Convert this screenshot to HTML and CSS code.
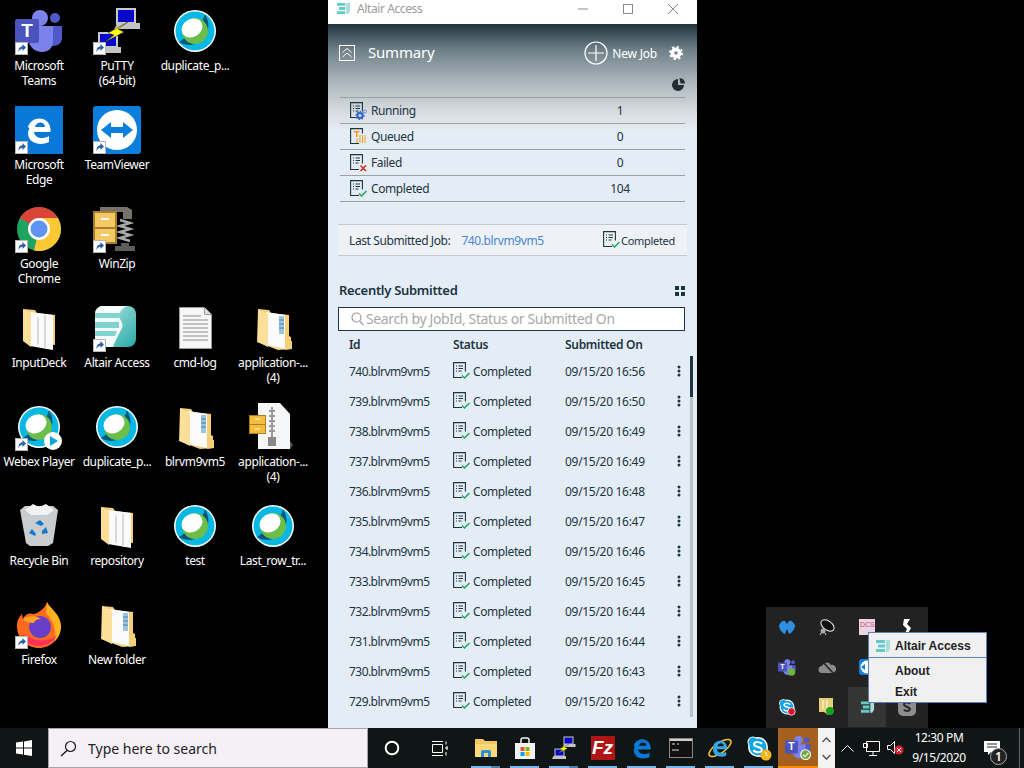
FILE: index.html
```html
<!DOCTYPE html>
<html lang="en">
<head>
    <meta charset="UTF-8">
    <title>Altair Access</title>
    <link rel="stylesheet" href="styles.css">
</head>
<body>

    <!-- Shared icons -->
    <svg class="sprites" width="0" height="0">
        <defs>
            <linearGradient id="altair-tile" x1="0" y1="0" x2="1" y2="1">
                <stop offset="0" stop-color="#b6ebe8"/>
                <stop offset="1" stop-color="#2aa9a6"/>
            </linearGradient>
        </defs>
        <symbol id="sc" viewBox="0 0 48 48">
            <rect x="0.5" y="35.5" width="12" height="12" fill="#fff" stroke="#b5b5b5"/>
            <path d="M3.5 45c0-4 1.500-5.500 4-5.800V37l3.500 3.500-3.500 3.500v-2.300c-1.500 0-3 .8-4 3.300z" fill="#2a5fa5"/>
        </symbol>
        <symbol id="webex" viewBox="0 0 48 48">
            <circle cx="24" cy="24" r="21" fill="#fff"/>
            <circle cx="24" cy="24" r="19.500" fill="#07b8e4"/>
            <path d="M34 7.400A19.500 19.500 0 0 1 8 35.200L15 30A12 12 0 0 0 31 15z" fill="#03577a"/>
            <circle cx="24" cy="24" r="13" fill="#6cbe4b"/>
            <ellipse cx="21" cy="21" rx="11" ry="9" transform="rotate(-30 21 21)" fill="#fff"/>
        </symbol>
        <symbol id="folder" viewBox="0 0 48 48">
            <path d="M8 5l12 1 2 3 18 2v30l-31-4z" fill="#f3cf78"/>
            <path d="M15 8l23 3v35l-23-4z" fill="#fbfbfb"/>
            <path d="M29 11l2 1v33l-2-1zM22 12l2 3v26l-2-1z" fill="#d9d9d9"/>
            <path d="M8 5l8 4v34l-8-6z" fill="#fbdf98"/>
        </symbol>
        <symbol id="folder-full" viewBox="0 0 48 48">
            <path d="M9 5l11 1 2 3 18 2v26l3 0v8l-14 1-21-8z" fill="#f3cf78"/>
            <path d="M17 8l19 3v34l-19-4z" fill="#fbfbfb"/>
            <path d="M30 12h5v18h-5z" fill="#9cc3dc"/>
            <path d="M30 16h5M30 20h5M30 24h5" stroke="#3d85b5"/>
            <path d="M36 30l6 3v12l-6 1z" fill="#f3cf78"/>
            <path d="M9 5l10 5v33L9 38z" fill="#fbe09a"/>
        </symbol>
        <symbol id="altair" viewBox="0 0 48 48">
            <rect x="2" y="2" width="41" height="41" rx="8" fill="url(#altair-tile)"/>
            <path d="M2 10a8 8 0 0 1 8-8h24c-6 3-9 8-7 13 2 4 4 7 1 11-2 4-5 9-8 17H10a8 8 0 0 1-8-8z" fill="#f6fbfb"/>
            <path d="M2 9h26l-2 5H2zM2 18h24v6H2zM2 29h20v-1H2z" fill="#7fd4cf"/>
            <path d="M2 27h22l-2 5H2z" fill="#7fd4cf"/>
        </symbol>
        <symbol id="applogo" viewBox="0 0 16 14">
            <path d="M1 1h9v3H1zM3 5.500h7v3H3zM1 10h9v3H1z" fill="#63cbc5"/>
            <path d="M11 1h4v9l-2 3h-2z" fill="#a5dfdc"/>
        </symbol>
        <symbol id="doc" viewBox="0 0 17 18">
            <path d="M9 15.500H.6V.6h11.800v9" fill="none" stroke="#1d3442" stroke-width="1.100"/>
            <path d="M3 4h1M3 6.500h1M3 9h1M5.500 4h4.500M5.500 6.500h4.500M5.500 9h3" stroke="#1d3442"/>
        </symbol>
        <symbol id="done" viewBox="0 0 17 18">
            <use href="#doc"/>
            <path d="M9 13.500l2.500 2.500 5-5" fill="none" stroke="#1aa75b" stroke-width="1.500"/>
        </symbol>
        <symbol id="fail" viewBox="0 0 17 18">
            <use href="#doc"/>
            <path d="M10.500 11.500l5.500 5.500M16 11.500l-5.500 5.500" stroke="#c8301c" stroke-width="1.600"/>
        </symbol>
        <symbol id="run" viewBox="0 0 17 18">
            <use href="#doc"/>
            <circle cx="10" cy="13.500" r="2.600" fill="none" stroke="#2f62c8" stroke-width="2"/>
            <circle cx="10" cy="13.500" r="4" fill="none" stroke="#2f62c8" stroke-width="1.200" stroke-dasharray="1.500 1.500"/>
            <circle cx="15" cy="9.500" r="1.500" fill="none" stroke="#6b8fd4"/>
        </symbol>
        <symbol id="queue" viewBox="0 0 17 18">
            <path d="M9 15.500H.6V.6h11.800v5" fill="none" stroke="#1d3442" stroke-width="1.100"/>
            <path d="M3.500 3h6v1.500h-2V9H6V4.500h-2.500z" fill="#f29a12"/>
            <path d="M7 10v5M10 7v8M12.500 7v8M15 7v8" stroke="#f29a12"/>
        </symbol>
        <symbol id="kebab" viewBox="0 0 4 12">
            <circle cx="2" cy="2" r="1.500"/><circle cx="2" cy="6" r="1.500"/><circle cx="2" cy="10" r="1.500"/>
        </symbol>
        <symbol id="putty" viewBox="0 0 48 48">
            <path d="M23 1h20v17H23z" fill="#c9c9c9"/><path d="M25 3h16v12H25z" fill="#0707c9"/>
            <path d="M25 16h22v6H21z" fill="#c4c4c4"/>
            <path d="M5 25h20v16H5z" fill="#c9c9c9"/><path d="M7 27h16v12H7z" fill="#0707c9"/>
            <path d="M3 40h25v6H0z" fill="#c4c4c4"/>
            <path d="M35 15L15 26l6 2-9 7 19-10-6-3 10-7z" fill="#ff0" stroke="#222" stroke-width=".5"/>
        </symbol>
        <symbol id="edge" viewBox="0 0 32 32">
            <path d="M5 13C7 6 14 3 20 5c6 2 8 8 7.500 13H11c.5 6 9 8 15 4v6c-8 4-20 2-21-8-.5-4 3-9 8-10-3 1-5 3-6 5zm7 0h10c0-6-9-6-10 0z" fill="currentColor"/>
        </symbol>
        <symbol id="skype" viewBox="0 0 24 24">
            <circle cx="12" cy="12" r="10" fill="#fff"/>
            <circle cx="7" cy="7" r="5.500" fill="#fff"/><circle cx="17" cy="17" r="5.500" fill="#fff"/>
            <circle cx="12" cy="12" r="8.500" fill="#12a5e6"/>
            <circle cx="7" cy="7" r="4.500" fill="#12a5e6"/><circle cx="17" cy="17" r="4.500" fill="#12a5e6"/>
            <path d="M16 9c-1-2-7-3-8 0 0 4 8 2 8 6-1 3-7 3-8.500 0" fill="none" stroke="#fff" stroke-width="2"/>
        </symbol>
        <symbol id="teams" viewBox="0 0 48 48">
            <circle cx="25" cy="11" r="8" fill="#7b83eb"/>
            <circle cx="40" cy="11" r="5" fill="#5059c9"/>
            <path d="M36 19h11v12c0 5-4 8-9 8h-4z" fill="#5059c9"/>
            <path d="M14 19h24v16c0 6-5 10-11 10-6 0-12-4-13-10z" fill="#7b83eb"/>
            <rect y="12" width="24" height="24" rx="2" fill="#4b53bc"/>
        </symbol>
    </svg>

    <div class="desktop">
        <div class="shortcuts">
            <a class="shortcut"><svg class="ico" viewBox="0 0 48 48"><use href="#teams"/><text x="12" y="30" class="logo-t">T</text><use href="#sc"/></svg><span>Microsoft<br>Teams</span></a>
            <a class="shortcut"><svg class="ico"><use href="#putty"/><use href="#sc"/></svg><span>PuTTY<br>(64-bit)</span></a>
            <a class="shortcut"><svg class="ico"><use href="#webex"/></svg><span>duplicate_p...</span></a>
            <a class="shortcut"></a>

            <a class="shortcut">
                <svg class="ico" viewBox="0 0 48 48">
                    <rect width="48" height="48" fill="#0a78d7"/>
                    <svg x="8" y="8" width="32" height="32" color="#fff"><use href="#edge"/></svg>
                    <use href="#sc"/>
                </svg>
                <span>Microsoft<br>Edge</span>
            </a>
            <a class="shortcut">
                <svg class="ico" viewBox="0 0 48 48">
                    <rect width="48" height="48" rx="3" fill="#0b7fdc"/>
                    <circle cx="24" cy="24" r="20" fill="#fff"/>
                    <path d="M8 24l10-8v5h12v-5l10 8-10 8v-5H18v5z" fill="#0b7fdc"/>
                    <use href="#sc"/>
                </svg>
                <span>TeamViewer</span>
            </a>
            <a class="shortcut"></a>
            <a class="shortcut"></a>

            <a class="shortcut">
                <svg class="ico" viewBox="0 0 48 48">
                    <circle cx="24" cy="24" r="22" fill="#1da462"/>
                    <path d="M24 24L5 13a22 22 0 0 1 38 0z" fill="#db4437"/>
                    <path d="M24 24h22a22 22 0 0 1-27 21.500L24 24zM24 13h19a22 22 0 0 1 3 11H34z" fill="#fcc934"/>
                    <circle cx="24" cy="24" r="11" fill="#fff"/>
                    <circle cx="24" cy="24" r="8.500" fill="#5f95f0"/>
                    <use href="#sc"/>
                </svg>
                <span>Google<br>Chrome</span>
            </a>
            <a class="shortcut">
                <svg class="ico" viewBox="0 0 48 48">
                    <path d="M7 2h27l5 3v9h-9V7H7z" fill="#77726a"/>
                    <path d="M27 15l10 3-10 3 10 3-10 3 10 3-10 3 10 3" fill="none" stroke="#a9a9a9" stroke-width="2.500"/>
                    <path d="M28 38h8v3h-8zM22 41h20v5H22z" fill="#5d5d5d"/>
                    <rect y="6" width="24" height="33" fill="#a57f2c"/>
                    <rect x="2" y="8" width="20" height="14" fill="#f4c965"/>
                    <rect x="2" y="24" width="20" height="13" fill="#f4c965"/>
                    <path d="M8 14h8M8 30h8" stroke="#fff" stroke-width="2"/>
                    <use href="#sc"/>
                </svg>
                <span>WinZip</span>
            </a>
            <a class="shortcut"></a>
            <a class="shortcut"></a>

            <a class="shortcut"><svg class="ico"><use href="#folder"/></svg><span>InputDeck</span></a>
            <a class="shortcut"><svg class="ico"><use href="#altair"/><use href="#sc"/></svg><span>Altair Access</span></a>
            <a class="shortcut">
                <svg class="ico" viewBox="0 0 48 48">
                    <path d="M8.500 3.500h25l7 7v34h-32z" fill="#f6f6f6" stroke="#9a9a9a"/>
                    <path d="M33.500 3.500v7h7" fill="#ddd" stroke="#9a9a9a"/>
                    <path d="M12 12h18M12 16h25M12 20h25M12 24h25M12 28h25M12 32h25M12 36h25" stroke="#8c8c8c"/>
                </svg>
                <span>cmd-log</span>
            </a>
            <a class="shortcut"><svg class="ico"><use href="#folder-full"/></svg><span>application-...<br>(4)</span></a>

            <a class="shortcut">
                <svg class="ico">
                    <use href="#webex"/>
                    <circle cx="38" cy="38" r="9" fill="#fff"/>
                    <path d="M35 33l8 5-8 5z" fill="#07a4d8"/>
                    <use href="#sc"/>
                </svg>
                <span>Webex Player</span>
            </a>
            <a class="shortcut"><svg class="ico"><use href="#webex"/></svg><span>duplicate_p...</span></a>
            <a class="shortcut"><svg class="ico"><use href="#folder-full"/></svg><span>blrvm9vm5</span></a>
            <a class="shortcut">
                <svg class="ico" viewBox="0 0 48 48">
                    <path d="M9 0h22l10 11v35H9z" fill="#f4f6f8"/>
                    <path d="M41 38l3 4-3 4z" fill="#555"/>
                    <path d="M23 4v30M20 8h6M20 13h6M20 18h6M20 23h6M20 28h6" stroke="#9a9a9a" stroke-width="2"/>
                    <rect x="19" y="34" width="8" height="9" fill="#888"/>
                    <rect y="12" width="17" height="19" fill="#a57f2c"/>
                    <rect x="1" y="13" width="15" height="8" fill="#f6bd3c"/>
                    <rect x="1" y="22" width="15" height="8" fill="#f6bd3c"/>
                    <path d="M6 16h5M6 26h5" stroke="#fff"/>
                </svg>
                <span>application-...<br>(4)</span>
            </a>

            <a class="shortcut">
                <svg class="ico" viewBox="0 0 48 48">
                    <path d="M5 8l5-4h28l5 4-5 33-5 3H15l-4-3z" fill="#c9cdd0"/>
                    <path d="M10 8l8-6 6 3 7-3 8 6-7 5H16z" fill="#f2f2f2"/>
                    <path d="M20 21l5-3 4 4-3 2zM31 25l2 6-6 1v-3zM17 27l4 5-1 2-6-3z" fill="#1479c9"/>
                </svg>
                <span>Recycle Bin</span>
            </a>
            <a class="shortcut"><svg class="ico"><use href="#folder"/></svg><span>repository</span></a>
            <a class="shortcut"><svg class="ico"><use href="#webex"/></svg><span>test</span></a>
            <a class="shortcut"><svg class="ico"><use href="#webex"/></svg><span>Last_row_tr...</span></a>

            <a class="shortcut">
                <svg class="ico" viewBox="0 0 48 48">
                    <path d="M32 1c2 6 13 11 14 24 0 12-10 22-22 22C12 47 1 37 2 23c.5-5 3-8 5-10l1 5c3-6 7-6 11-5 4-1 11-5 13-12z" fill="#ff6a1f"/>
                    <path d="M32 1c2 6 13 11 14 24 0 6-2 11-6 15 1-12-2-22-9-27z" fill="#ffb321"/>
                    <path d="M6 34c4 9 14 13 24 10 6-2 10-6 12-10-6 6-20 8-29 1z" fill="#ff2f5c"/>
                    <circle cx="25" cy="26" r="11" fill="#6a3fc8"/>
                    <path d="M8 18c5-3 12-4 18 0-4 0-6 1-7 4-4 0-8-1-11-4z" fill="#ffa41f"/>
                    <use href="#sc"/>
                </svg>
                <span>Firefox</span>
            </a>
            <a class="shortcut"><svg class="ico"><use href="#folder-full"/></svg><span>New folder</span></a>
        </div>

        <!-- Altair Access window -->
        <section class="window">
            <div class="titlebar">
                <svg class="title-logo"><use href="#applogo"/></svg>
                <span class="title-text">Altair Access</span>
                <div class="win-controls">
                    <svg width="12" height="12" viewBox="0 0 12 12"><path d="M1 6h10" stroke="#8a8a8a"/></svg>
                    <svg width="12" height="12" viewBox="0 0 12 12"><rect x="1.500" y="1.500" width="9" height="9" fill="none" stroke="#8a8a8a"/></svg>
                    <svg width="12" height="12" viewBox="0 0 12 12"><path d="M1 1l10 10M11 1L1 11" stroke="#8a8a8a"/></svg>
                </div>
            </div>

            <div class="win-body">
                <header class="head">
                    <svg class="collapse" width="16" height="16" viewBox="0 0 16 16">
                        <rect x=".5" y=".5" width="15" height="15" fill="none" stroke="#fff"/>
                        <path d="M3.500 7.500L8 3.500l4.500 4M3.500 12L8 8l4.500 4" fill="none" stroke="#fff"/>
                    </svg>
                    <h1 class="head-title">Summary</h1>
                    <svg class="new-job-ico" width="24" height="24" viewBox="0 0 24 24">
                        <circle cx="12" cy="12" r="11" fill="none" stroke="#fff" stroke-width="1.200"/>
                        <path d="M12 4v16M4 12h16" stroke="#fff" stroke-width="1.200"/>
                    </svg>
                    <span class="new-job">New Job</span>
                    <svg class="gear" width="14" height="14" viewBox="0 0 14 14">
                        <circle cx="7" cy="7" r="3.600" fill="none" stroke="#fff" stroke-width="3.600"/>
                        <circle cx="7" cy="7" r="6" fill="none" stroke="#fff" stroke-width="2" stroke-dasharray="2.300 2.400"/>
                    </svg>
                </header>

                <div class="pie-row">
                    <svg width="13" height="13" viewBox="0 0 13 13">
                        <path d="M6 1a6 6 0 1 0 6 6H6z" fill="#222c33"/>
                        <path d="M7.500 0a5.500 5.500 0 0 1 5.500 5.500H8.500z" fill="#222c33"/>
                    </svg>
                </div>

                <div class="summary">
                    <div class="summary-row"><svg class="status-ico"><use href="#run"/></svg><span class="summary-name">Running</span><span class="summary-count">1</span></div>
                    <div class="summary-row"><svg class="status-ico"><use href="#queue"/></svg><span class="summary-name">Queued</span><span class="summary-count">0</span></div>
                    <div class="summary-row"><svg class="status-ico"><use href="#fail"/></svg><span class="summary-name">Failed</span><span class="summary-count">0</span></div>
                    <div class="summary-row"><svg class="status-ico"><use href="#done"/></svg><span class="summary-name">Completed</span><span class="summary-count">104</span></div>
                </div>

                <div class="last-job">
                    <span>Last Submitted Job:</span>
                    <span class="last-id">740.blrvm9vm5</span>
                    <svg class="status-ico"><use href="#done"/></svg>
                    <span class="last-status">Completed</span>
                </div>

                <div class="recent-head">
                    <h2 class="recent-title">Recently Submitted</h2>
                    <svg width="10" height="10" viewBox="0 0 10 10"><path d="M0 0h4v4H0zM6 0h4v4H6zM0 6h4v4H0zM6 6h4v4H6z" fill="#1d3442"/></svg>
                </div>

                <div class="search">
                    <svg width="13" height="14" viewBox="0 0 13 14">
                        <circle cx="5.500" cy="5.500" r="4.500" fill="none" stroke="#9a9a9a" stroke-width="1.200"/>
                        <path d="M8.500 9l4 4" stroke="#9a9a9a" stroke-width="1.200"/>
                    </svg>
                    <input class="search-input" type="text" placeholder="Search by JobId, Status or Submitted On">
                </div>

                <div class="job-row job-head">
                    <span class="col-id">Id</span><span class="col-status">Status</span><span class="col-date">Submitted On</span>
                </div>

                <div class="jobs">
                    <div class="job-list">
                        <div class="job-row"><span class="col-id">740.blrvm9vm5</span><span class="col-status"><svg class="status-ico"><use href="#done"/></svg>Completed</span><span class="col-date">09/15/20 16:56</span><svg class="kebab"><use href="#kebab"/></svg></div>
                        <div class="job-row"><span class="col-id">739.blrvm9vm5</span><span class="col-status"><svg class="status-ico"><use href="#done"/></svg>Completed</span><span class="col-date">09/15/20 16:50</span><svg class="kebab"><use href="#kebab"/></svg></div>
                        <div class="job-row"><span class="col-id">738.blrvm9vm5</span><span class="col-status"><svg class="status-ico"><use href="#done"/></svg>Completed</span><span class="col-date">09/15/20 16:49</span><svg class="kebab"><use href="#kebab"/></svg></div>
                        <div class="job-row"><span class="col-id">737.blrvm9vm5</span><span class="col-status"><svg class="status-ico"><use href="#done"/></svg>Completed</span><span class="col-date">09/15/20 16:49</span><svg class="kebab"><use href="#kebab"/></svg></div>
                        <div class="job-row"><span class="col-id">736.blrvm9vm5</span><span class="col-status"><svg class="status-ico"><use href="#done"/></svg>Completed</span><span class="col-date">09/15/20 16:48</span><svg class="kebab"><use href="#kebab"/></svg></div>
                        <div class="job-row"><span class="col-id">735.blrvm9vm5</span><span class="col-status"><svg class="status-ico"><use href="#done"/></svg>Completed</span><span class="col-date">09/15/20 16:47</span><svg class="kebab"><use href="#kebab"/></svg></div>
                        <div class="job-row"><span class="col-id">734.blrvm9vm5</span><span class="col-status"><svg class="status-ico"><use href="#done"/></svg>Completed</span><span class="col-date">09/15/20 16:46</span><svg class="kebab"><use href="#kebab"/></svg></div>
                        <div class="job-row"><span class="col-id">733.blrvm9vm5</span><span class="col-status"><svg class="status-ico"><use href="#done"/></svg>Completed</span><span class="col-date">09/15/20 16:45</span><svg class="kebab"><use href="#kebab"/></svg></div>
                        <div class="job-row"><span class="col-id">732.blrvm9vm5</span><span class="col-status"><svg class="status-ico"><use href="#done"/></svg>Completed</span><span class="col-date">09/15/20 16:44</span><svg class="kebab"><use href="#kebab"/></svg></div>
                        <div class="job-row"><span class="col-id">731.blrvm9vm5</span><span class="col-status"><svg class="status-ico"><use href="#done"/></svg>Completed</span><span class="col-date">09/15/20 16:44</span><svg class="kebab"><use href="#kebab"/></svg></div>
                        <div class="job-row"><span class="col-id">730.blrvm9vm5</span><span class="col-status"><svg class="status-ico"><use href="#done"/></svg>Completed</span><span class="col-date">09/15/20 16:43</span><svg class="kebab"><use href="#kebab"/></svg></div>
                        <div class="job-row"><span class="col-id">729.blrvm9vm5</span><span class="col-status"><svg class="status-ico"><use href="#done"/></svg>Completed</span><span class="col-date">09/15/20 16:42</span><svg class="kebab"><use href="#kebab"/></svg></div>
                    </div>
                    <div class="scrollbar"><div class="scroll-thumb"></div></div>
                </div>
            </div>
        </section>

        <!-- Hidden icons flyout -->
        <div class="tray-pop">
            <svg width="16" height="14" viewBox="0 0 16 14"><path d="M0 5C2 1 5 0 6 1l2 3 2-3c1-1 4 0 6 4 0 4-3 8-6 9L8 9l-2 5C3 13 0 9 0 5z" fill="#2c8fe0"/></svg>
            <svg width="18" height="18" viewBox="0 0 18 18"><ellipse cx="9.500" cy="7.500" rx="7.500" ry="4.500" transform="rotate(35 9.500 7.500)" fill="#111" stroke="#eee"/><circle cx="5" cy="13" r="2.500" fill="#aaa"/><path d="M3 15l-1 2M7 15l1 2" stroke="#ccc"/></svg>
            <svg width="16" height="16" viewBox="0 0 16 16"><rect width="16" height="16" fill="#ecd4e2"/><text x="1" y="8" class="docs-text">DCS</text></svg>
            <svg width="10" height="18" viewBox="0 0 10 18"><path d="M2 1h6l-3 5 4 4-4 7H2l3-6-4-4z" fill="#fff"/></svg>

            <svg width="18" height="18" viewBox="0 0 48 48"><use href="#teams"/><text x="12" y="30" class="logo-t">T</text><circle cx="36" cy="37" r="10" fill="#6cb33f"/></svg>
            <svg width="18" height="14" viewBox="0 0 18 14"><path d="M4 13a3.500 3.500 0 0 1 0-7 5 5 0 0 1 9-1 4 4 0 0 1 2 8z" fill="#8a8a8a"/><path d="M3 0l13 14" stroke="#222" stroke-width="1.500"/></svg>
            <svg width="16" height="16" viewBox="0 0 16 16"><rect width="16" height="16" rx="3" fill="#0b7fdc"/><circle cx="8" cy="8" r="6.500" fill="#fff"/><path d="M2 8l4-3v6z" fill="#0b7fdc"/></svg>
            <span class="tray-gap"></span>

            <svg width="18" height="18" viewBox="0 0 24 24"><use href="#skype"/><circle cx="18" cy="18" r="5" fill="#d8152c" stroke="#fff"/></svg>
            <svg width="16" height="18" viewBox="0 0 16 18"><path d="M0 0h14v10l-5 7-4-3H0z" fill="#e8cd77"/><path d="M4 2v9M8 2v9" stroke="#fff"/><circle cx="11" cy="13" r="4" fill="#17a01e"/></svg>
            <span class="tray-active"><svg width="15" height="14"><use href="#applogo"/></svg></span>
            <svg width="18" height="18" viewBox="0 0 18 18"><rect width="18" height="18" rx="5" fill="#8d8d8d"/><path d="M12 6c-1-2-6-2-6 0.500 0 2.500 6 2 6 5-1 2-5 2-6 0" fill="none" stroke="#2a2a2a" stroke-width="2"/></svg>
        </div>

        <!-- Tray context menu -->
        <div class="tray-menu">
            <div class="menu-title"><svg width="16" height="14"><use href="#applogo"/></svg>Altair Access</div>
            <div class="menu-item">About</div>
            <div class="menu-item">Exit</div>
        </div>
    </div>

    <footer class="taskbar">
        <div class="start">
            <svg width="16" height="16" viewBox="0 0 16 16"><path d="M0 2.500L7 1.500v6H0zM8 1.400L16 0v7.500H8zM0 8.500h7v6l-7-1zM8 8.500h8V16l-8-1.200z" fill="#fff"/></svg>
        </div>
        <div class="task-search">
            <svg width="17" height="17" viewBox="0 0 17 17"><circle cx="10.500" cy="6.500" r="5" fill="none" stroke="#1a1a1a" stroke-width="1.200"/><path d="M7 10.500L1 16" stroke="#1a1a1a" stroke-width="1.400"/></svg>
            <span>Type here to search</span>
        </div>
        <div class="cortana"><svg width="16" height="16" viewBox="0 0 16 16"><circle cx="8" cy="8" r="6.300" fill="none" stroke="#fff" stroke-width="2"/></svg></div>
        <div class="taskview"><svg width="17" height="15" viewBox="0 0 17 15"><path d="M1 .5h11M1 14.500h11M1.500 3.500h10v8h-10zM15 .5v3M15 6h2v2h-2zM15 11v3.500" fill="none" stroke="#fff"/></svg></div>

        <div class="app running multi">
            <svg width="22" height="20" viewBox="0 0 22 20"><path d="M0 1h8l2 2h12v15H0z" fill="#f2c661"/><path d="M0 6h22v13H0z" fill="#fbd878"/><path d="M6 19v-5a2 2 0 0 1 2-2h6a2 2 0 0 1 2 2v5h-3v-4H9v4z" fill="#2a8fd8"/></svg>
        </div>
        <div class="app running">
            <svg width="24" height="24" viewBox="0 0 24 24"><path d="M2 7h20v16H2z" fill="#f3f3f3"/><path d="M8 8V4a2 2 0 0 1 2-2h4a2 2 0 0 1 2 2v4" fill="none" stroke="#f3f3f3" stroke-width="1.500"/><path d="M7.500 11h4v4h-4z" fill="#f25022"/><path d="M12.500 11h4v4h-4z" fill="#7fba00"/><path d="M7.500 16h4v4h-4z" fill="#00a4ef"/><path d="M12.500 16h4v4h-4z" fill="#ffb900"/></svg>
        </div>
        <div class="app running multi"><svg width="24" height="24" viewBox="0 0 48 48"><use href="#putty"/></svg></div>
        <div class="app running filezilla"><span>Fz</span></div>
        <div class="app running"><svg class="edge-blue" width="24" height="24"><use href="#edge"/></svg></div>
        <div class="app running">
            <svg width="24" height="20" viewBox="0 0 24 20"><rect x=".5" y=".5" width="23" height="19" fill="#111" stroke="#888"/><path d="M1 1h22v2H1z" fill="#cfcfcf"/><path d="M3 6h3M8 6h2M3 12h7" stroke="#ddd"/></svg>
        </div>
        <div class="app running">
            <svg width="26" height="26" viewBox="0 0 26 26"><ellipse cx="13" cy="13" rx="13" ry="5" transform="rotate(-35 13 13)" fill="none" stroke="#f2c233" stroke-width="1.500"/><svg x="3" y="3" width="20" height="20" color="#35a5e5" viewBox="0 0 32 32"><use href="#edge"/></svg></svg>
        </div>
        <div class="app running">
            <svg width="26" height="26" viewBox="0 0 26 26"><svg width="24" height="24"><use href="#skype"/></svg><circle cx="20" cy="20" r="5.500" fill="#f7b51c"/><path d="M20 17v3l2 1" fill="none" stroke="#fff"/></svg>
        </div>
        <div class="app teams-app">
            <svg width="26" height="26" viewBox="0 0 48 48"><use href="#teams"/><text x="12" y="30" class="logo-t">T</text><circle cx="38" cy="38" r="9" fill="#71a83b" stroke="#fff" stroke-width="2"/><path d="M33 38l4 4 6-7" fill="none" stroke="#fff" stroke-width="2"/></svg>
        </div>
        <div class="task-scroll">
            <svg width="9" height="6" viewBox="0 0 9 6"><path d="M.5 5l4-4 4 4" fill="none" stroke="#555" stroke-width="1.500"/></svg>
            <svg width="9" height="6" viewBox="0 0 9 6"><path d="M.5 1l4 4 4-4" fill="none" stroke="#555" stroke-width="1.500"/></svg>
        </div>

        <div class="tray-item"><svg width="13" height="7" viewBox="0 0 13 7"><path d="M.5 6.500l6-6 6 6" fill="none" stroke="#fff"/></svg></div>
        <div class="tray-item"><svg width="17" height="15" viewBox="0 0 17 15"><path d="M3.500.5h13v10h-13zM10 11v3M6 14.500h8M.5 2.500h4v4h-4z" fill="#111" stroke="#fff"/></svg></div>
        <div class="tray-item"><svg width="17" height="14" viewBox="0 0 17 14"><path d="M.5 4.500h3l4-4v12l-4-4h-3z" fill="none" stroke="#fff"/><circle cx="12" cy="9" r="4.500" fill="#d9232e"/><path d="M10 7l4 4M14 7l-4 4" stroke="#fff"/></svg></div>
        <div class="clock"><span>12:30 PM</span><span>9/15/2020</span></div>
        <div class="notify">
            <svg width="16" height="14" viewBox="0 0 16 14"><path d="M0 0h16v11H7l-3 3v-3H0z" fill="#fff"/><path d="M3 3h10M3 6h10" stroke="#222"/></svg>
            <span class="notify-count">1</span>
        </div>
        <div class="show-desktop"></div>
    </footer>

</body>
</html>
```

FILE: styles.css
```css
* {
    box-sizing: border-box;
}

body {
    display: flex;
    flex-direction: column;
    width: 1024px;
    height: 768px;
    margin: 0;
    overflow: hidden;
    background: #000;
    font-family: "Noto Sans", sans-serif;
    font-size: 12px;
}

.sprites {
    position: absolute;
}

.logo-t {
    fill: #fff;
    font-family: "Liberation Sans", sans-serif;
    font-size: 19px;
    font-weight: bold;
    text-anchor: middle;
}

.docs-text {
    fill: #c0507a;
    font-family: "Liberation Sans", sans-serif;
    font-size: 7px;
}

/* Desktop */
.desktop {
    position: relative;
    flex: 1;
}

.shortcuts {
    display: grid;
    grid-template-columns: repeat(4, 78px);
    grid-auto-rows: 99px;
    padding-top: 7px;
}

.shortcut {
    display: flex;
    flex-direction: column;
    align-items: center;
    color: #fff;
    line-height: 15px;
    text-align: center;
    white-space: nowrap;
}

.shortcut span {
    margin-top: 3px;
    letter-spacing: -0.4px;
}

.ico {
    width: 48px;
    height: 48px;
    flex: none;
}

/* App window */
.window {
    position: absolute;
    top: 0;
    left: 328px;
    display: flex;
    flex-direction: column;
    width: 369px;
    height: 728px;
    background: #e4edf5;
    color: #1d3442;
    letter-spacing: -0.4px;
}

.titlebar {
    display: flex;
    align-items: flex-start;
    height: 24px;
    padding: 2px 0 0 8px;
    background: #fff;
}

.title-logo {
    width: 15px;
    height: 13px;
}

.title-text {
    margin-left: 6px;
    color: #9b9b9b;
    line-height: 14px;
}

.win-controls {
    display: flex;
    gap: 33px;
    margin-left: auto;
    padding: 1px 18px 0 0;
}

.win-body {
    flex: 1;
    padding: 0 12px 0 10px;
    background: linear-gradient(#20343f 0, #6f8089 26px, #a9b3b9 56px, #d9dee1 90px, #e4edf5 108px);
}

.head {
    display: flex;
    align-items: center;
    height: 54px;
    padding: 4px 0 0 1px;
}

.head-title {
    margin: -2px 0 0 13px;
    color: #fff;
    font-size: 15px;
    font-weight: normal;
    letter-spacing: -0.2px;
}

.new-job-ico {
    margin-left: auto;
}

.new-job {
    margin-left: 4px;
    color: #fff;
    letter-spacing: -0.2px;
}

.gear {
    margin: 0 2px 0 12px;
}

.pie-row {
    display: flex;
    justify-content: flex-end;
    height: 12px;
    margin-bottom: 7px;
}

.summary {
    margin-left: 2px;
    border-bottom: 1px solid #9c9fa3;
}

.summary-row {
    display: flex;
    align-items: center;
    height: 26px;
    padding-left: 10px;
    border-top: 1px solid #9c9fa3;
}

.status-ico {
    width: 17px;
    height: 18px;
    flex: none;
}

.summary-name {
    width: 229px;
    margin-left: 4px;
}

.summary-count {
    width: 40px;
    text-align: center;
}

.last-job {
    display: flex;
    align-items: center;
    width: 349px;
    height: 32px;
    margin-top: 22px;
    padding: 0 12px 0 11px;
    border-top: 1px solid #c4c8cc;
    border-bottom: 1px solid #c4c8cc;
    background: #eef2f7;
}

.last-id {
    margin-left: 11px;
    color: #4a86d8;
}

.last-job .status-ico {
    margin-left: auto;
}

.last-status {
    margin-left: 1px;
    font-size: 11px;
    letter-spacing: -0.3px;
}

.recent-head {
    display: flex;
    align-items: center;
    justify-content: space-between;
    height: 16px;
    margin-top: 27px;
    padding-left: 1px;
}

.recent-title {
    margin: -2px 0 0;
    font-size: 13px;
    font-weight: 600;
    letter-spacing: -0.3px;
}

.search {
    display: flex;
    align-items: center;
    gap: 2px;
    height: 24px;
    margin-top: 8px;
    padding-left: 12px;
    border: 1px solid #1d3442;
    background: #fff;
}

.search-input {
    flex: 1;
    margin-bottom: 2px;
    padding: 0;
    border: 0;
    outline: 0;
    background: none;
    font-family: inherit;
    font-size: 14px;
    letter-spacing: -0.36px;
}

.search-input::placeholder {
    color: #a8a8a8;
    opacity: 1;
}

.jobs {
    display: flex;
    margin-right: -8px;
}

.job-list {
    width: 352px;
}

.job-row {
    display: flex;
    align-items: center;
    height: 30px;
    padding-left: 11px;
}

.job-head {
    height: 25px;
    padding-top: 2px;
    font-weight: 600;
    letter-spacing: -0.3px;
}

.col-id {
    width: 104px;
    letter-spacing: -0.55px;
}

.col-status {
    display: flex;
    align-items: center;
    gap: 3px;
    width: 112px;
}

.col-date {
    width: 110px;
    letter-spacing: -0.3px;
}

.kebab {
    width: 4px;
    height: 12px;
    margin-left: 2px;
    fill: #1d3442;
}

.scrollbar {
    width: 3px;
    height: 361px;
    background: #b9c0c7;
}

.scroll-thumb {
    height: 41px;
    background: #1d3442;
}

/* Tray flyout */
.tray-pop {
    position: absolute;
    right: 96px;
    bottom: 0;
    display: grid;
    grid-template-columns: repeat(4, 40px);
    grid-auto-rows: 40px;
    place-items: center;
    width: 162px;
    height: 121px;
    padding-left: 1px;
    background: #222;
}

.tray-active {
    display: flex;
    align-items: center;
    justify-content: center;
    width: 38px;
    height: 40px;
    background: #353535;
}

.tray-menu {
    position: absolute;
    top: 632px;
    left: 868px;
    width: 119px;
    height: 71px;
    border: 1px solid #5c80b8;
    background: #f0f0f0;
    color: #222;
    font-family: "Liberation Sans", sans-serif;
    font-size: 12px;
    font-weight: bold;
}

.menu-title {
    display: flex;
    align-items: center;
    gap: 4px;
    height: 25px;
    padding: 1px 0 0 6px;
    border-bottom: 1px solid #5c80b8;
}

.menu-item {
    height: 21px;
    padding: 6px 0 0 26px;
}

/* Taskbar */
.taskbar {
    display: flex;
    flex: none;
    height: 40px;
    background: #101615;
    color: #fff;
}

.start {
    display: flex;
    align-items: center;
    justify-content: center;
    width: 48px;
}

.task-search {
    display: flex;
    align-items: center;
    gap: 11px;
    width: 320px;
    padding-left: 11px;
    border: 1px solid #a5a5a5;
    background: #f5f0f6;
    color: #222;
    font-size: 14px;
}

.cortana {
    display: flex;
    align-items: center;
    justify-content: center;
    width: 48px;
}

.taskview {
    display: flex;
    align-items: center;
    justify-content: center;
    width: 50px;
    padding-right: 4px;
}

.app {
    position: relative;
    display: flex;
    align-items: center;
    justify-content: center;
    width: 39px;
}

.running::after {
    content: "";
    position: absolute;
    right: 5px;
    bottom: 0;
    left: 5px;
    height: 2px;
    background: #76b9ed;
}

.multi::after {
    background: linear-gradient(90deg, #76b9ed 68%, #4f81a8 68%);
}

.edge-blue {
    color: #0a78d7;
}

.filezilla span {
    width: 24px;
    height: 24px;
    background: #b01515;
    color: #fff;
    font-family: "Liberation Sans", sans-serif;
    font-size: 19px;
    font-style: italic;
    font-weight: bold;
    line-height: 24px;
    text-align: center;
}

.teams-app {
    width: 40px;
    border-bottom: 2px solid #ff8c00;
    background: #a4601f;
}

.task-scroll {
    display: flex;
    flex-direction: column;
    align-items: center;
    justify-content: space-around;
    width: 17px;
    padding: 3px 0;
    background: #f4f4f4;
}

.tray-item {
    display: flex;
    align-items: center;
    justify-content: center;
    width: 24px;
}

.clock {
    display: flex;
    flex-direction: column;
    align-items: center;
    justify-content: center;
    width: 64px;
    line-height: 20px;
    letter-spacing: -0.4px;
}

.notify {
    position: relative;
    display: flex;
    align-items: center;
    justify-content: center;
    width: 48px;
    padding-right: 6px;
}

.notify-count {
    position: absolute;
    top: 20px;
    left: 19px;
    width: 17px;
    height: 17px;
    border: 1px solid #aaa;
    border-radius: 50%;
    background: #222;
    font-size: 12px;
    font-weight: 600;
    line-height: 15px;
    text-align: center;
}

.show-desktop {
    width: 5px;
    border-left: 1px solid #666;
}
```
